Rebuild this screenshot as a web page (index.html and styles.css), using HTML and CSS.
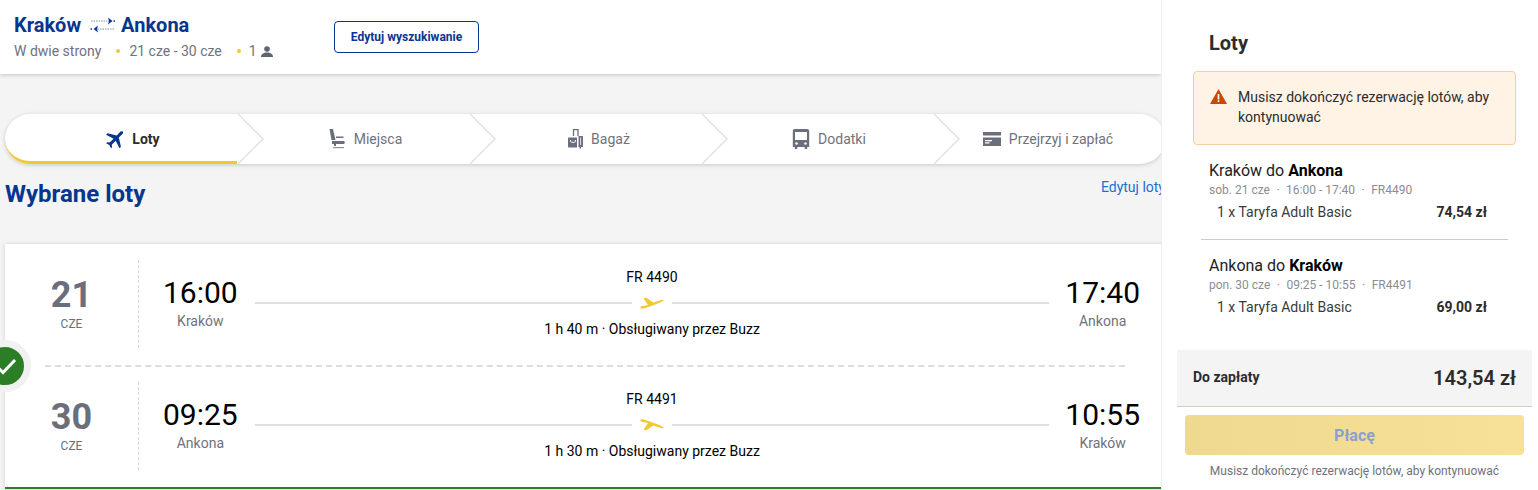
FILE: index.html
```html
<!DOCTYPE html>
<html lang="pl">
<head>
<meta charset="utf-8">
<title>Loty</title>
<link rel="stylesheet" href="styles.css">
</head>
<body>
<svg class="defs" width="0" height="0" aria-hidden="true">
  <symbol id="mini" viewBox="0 0 24 12"><path d="M.5 9.500L8 8 3.500 1.200 6 .5l7.500 5L21 3c2-.6 3-.1 2.500.6C22 5 18 6.500 14 8l-8 2.800c-2.500.8-4.500 1-5.400.8z"/></symbol>
</svg>
<div class="main">
  <header class="top">
    <div class="route">
      <div class="cities">Kraków
        <svg class="swap" width="26" height="16" viewBox="0 0 26 16"><g fill="none" stroke="#073590" stroke-opacity=".55" stroke-width="1" stroke-dasharray="1.500 1"><path d="M1 4h20M5 12h20"/></g><path fill="#073590" d="M18 .5l4.500 3.500L18 7.500 19 4zM8 8.500L3.500 12 8 15.500 7 12z"/><path fill="#073590" d="M23.500 3.300H25v1.500h-1.500zM.5 11.300H2v1.500H.5z"/></svg>
        Ankona</div>
      <div class="meta"><span>W dwie strony</span><i class="dot"></i><span>21 cze - 30 cze</span><i class="dot"></i><span class="pax">1
        <svg width="12" height="11" viewBox="0 0 12 11"><circle cx="6" cy="3" r="2.800" fill="#5f6470"/><path d="M0 11c0-3 2.500-4.500 6-4.500s6 1.500 6 4.500z" fill="#5f6470"/></svg></span></div>
    </div>
    <button class="edit">Edytuj wyszukiwanie</button>
  </header>
  <div class="content">
    <nav class="steps">
      <div class="step active">
        <svg class="ico" width="24" height="24" viewBox="0 0 24 24"><path fill="#073590" transform="rotate(45 12 12)" d="M21 16v-2l-8-5V3.500c0-.83-.67-1.500-1.500-1.500S10 2.670 10 3.500V9l-8 5v2l8-2.500V19l-2 1.500V22l3.500-1 3.500 1v-1.500L13 19v-5.500l8 2.500z"/></svg>
        <span>Loty</span>
        <svg class="chev" width="28" height="52" viewBox="0 0 28 52"><path d="M1 1l25 25L1 51" fill="none" stroke="#e2e2e2" stroke-width="1.500"/></svg>
      </div>
      <div class="step seat">
        <svg class="ico" width="16" height="20" viewBox="0 0 16 20"><path fill="#6b6f7c" d="M.5 0H4l2.500 11h-4zM7 7.500h7.500V9H7zM3 12h11.500c.8 0 1.300.6 1.300 1.500s-.5 1.500-1.300 1.500H3zM5 15h2v2H5z"/><path fill="#8f929b" d="M4 18h11v1.200H4z"/></svg>
        <span>Miejsca</span>
        <svg class="chev" width="28" height="52" viewBox="0 0 28 52"><path d="M1 1l25 25L1 51" fill="none" stroke="#e2e2e2" stroke-width="1.500"/></svg>
      </div>
      <div class="step bag">
        <svg class="ico" width="15" height="20" viewBox="0 0 15 20"><path fill="none" stroke="#6b6f7c" stroke-width="1.300" d="M5.500 7V.7h4.500V7"/><path fill="#6b6f7c" d="M10.500 7H14c.6 0 1 .4 1 1v9c0 .6-.4 1-1 1h-1v1.500h-1.500V18h-1z"/><path fill="#fff" d="M12.300 8.500h.8V16h-.8z"/><path fill="#6b6f7c" d="M1 8.500h8v10H1c-.6 0-1-.4-1-1v-8c0-.6.4-1 1-1z"/><path fill="none" stroke="#fff" d="M2.500 11v1.300c0 1.500 5 1.500 5 0V11"/></svg>
        <span>Bagaż</span>
        <svg class="chev" width="28" height="52" viewBox="0 0 28 52"><path d="M1 1l25 25L1 51" fill="none" stroke="#e2e2e2" stroke-width="1.500"/></svg>
      </div>
      <div class="step bus">
        <svg class="ico" width="18" height="20" viewBox="0 0 18 20"><path fill="#6b6f7c" d="M3 0h12c1.300 0 2.200.9 2.200 2.200V18h-2v2h-2.500v-2H5.300v2H2.800v-2H.8V2.200C.8.900 1.700 0 3 0z"/><path fill="#fff" d="M3 3h12v8H3z"/><circle cx="4.500" cy="14.500" r="1.200" fill="#fff"/><circle cx="13.500" cy="14.500" r="1.200" fill="#fff"/></svg>
        <span>Dodatki</span>
        <svg class="chev" width="28" height="52" viewBox="0 0 28 52"><path d="M1 1l25 25L1 51" fill="none" stroke="#e2e2e2" stroke-width="1.500"/></svg>
      </div>
      <div class="step last">
        <svg class="ico" width="18" height="14" viewBox="0 0 18 14"><path fill="#6b6f7c" d="M0 0h18v14H0z"/><path fill="#fff" d="M0 3.500h18v2H0zM2 8h7v1.300H2zM2 10.300h4.500v1.200H2z"/></svg>
        <span>Przejrzyj i zapłać</span>
      </div>
    </nav>
    <div class="heading"><h1>Wybrane loty</h1><a class="editlink">Edytuj loty</a></div>
    <section class="card">
      <div class="row">
        <div class="date"><b>21</b><small>CZE</small></div>
        <div class="leg">
          <div class="time"><strong>16:00</strong><span>Kraków</span></div>
          <div class="path">
            <div>FR 4490</div>
            <div class="line"><svg class="plane" width="24" height="12"><use href="#mini"/></svg></div>
            <div>1 h 40 m · Obsługiwany przez Buzz</div>
          </div>
          <div class="time"><strong>17:40</strong><span>Ankona</span></div>
        </div>
      </div>
      <div class="sep"></div>
      <div class="row">
        <div class="date"><b>30</b><small>CZE</small></div>
        <div class="leg">
          <div class="time"><strong>09:25</strong><span>Ankona</span></div>
          <div class="path">
            <div>FR 4491</div>
            <div class="line"><svg class="plane down" width="24" height="12"><use href="#mini"/></svg></div>
            <div>1 h 30 m · Obsługiwany przez Buzz</div>
          </div>
          <div class="time"><strong>10:55</strong><span>Kraków</span></div>
        </div>
      </div>
      <div class="check"><svg width="22" height="22" viewBox="0 0 22 22"><path d="M2 11.500l6 6L20 5" fill="none" stroke="#fff" stroke-width="3"/></svg></div>
    </section>
  </div>
</div>
<aside class="panel">
  <h2>Loty</h2>
  <div class="alert">
    <svg width="17" height="15" viewBox="0 0 17 15"><path fill="#c8490b" d="M8.500 0L17 15H0z"/><path fill="#fff" d="M7.700 5h1.600v5.500H7.700zM7.700 11.300h1.600v1.700H7.700z"/></svg>
    <p>Musisz dokończyć rezerwację lotów, aby kontynuować</p>
  </div>
  <div class="item first">
    <div class="title">Kraków do <b>Ankona</b></div>
    <div class="info"><span>sob. 21 cze</span><span>·</span><span>16:00 - 17:40</span><span>·</span><span>FR4490</span></div>
    <div class="fare"><span>1 x Taryfa Adult Basic</span><b>74,54 zł</b></div>
  </div>
  <div class="item">
    <div class="title">Ankona do <b>Kraków</b></div>
    <div class="info"><span>pon. 30 cze</span><span>·</span><span>09:25 - 10:55</span><span>·</span><span>FR4491</span></div>
    <div class="fare"><span>1 x Taryfa Adult Basic</span><b>69,00 zł</b></div>
  </div>
  <div class="total"><span>Do zapłaty</span><b>143,54 zł</b></div>
  <button class="pay">Płacę</button>
  <div class="note">Musisz dokończyć rezerwację lotów, aby kontynuować</div>
</aside>
</body>
</html>
```
FILE: styles.css
```css
* { box-sizing: border-box; }
html, body { margin: 0; height: 490px; overflow: hidden; }
body { display: flex; font-family: Roboto, "Liberation Sans", sans-serif; background: #fff; color: #000; }
.defs { position: absolute; }
.main { flex: 0 0 1161px; width: 1161px; height: 490px; overflow: hidden; background: #f4f4f4; }
.top { height: 74px; background: #fff; box-shadow: 0 1px 4px rgba(0,0,0,.2); display: flex; align-items: flex-start; padding: 13px 0 0 14px; position: relative; }
.route { width: 320px; }
.cities { display: flex; align-items: center; gap: 8px; font-size: 20px; font-weight: 700; line-height: 24px; color: #073590; }
.swap { flex: none; margin-left: 1px; margin-right: -3px; }
.meta { display: flex; align-items: center; margin-top: 5px; font-size: 14px; line-height: 18px; color: #6f727c; }
.dot { width: 4px; height: 4px; border-radius: 50%; background: #f1c933; margin: 0 9px 0 15px; }
.pax { display: flex; align-items: center; gap: 4px; margin-left: -1px; }
.edit { width: 145px; height: 32px; margin-top: 8px; border: 1px solid #073590; border-radius: 4px; background: #fff; color: #073590; font: 700 12px Roboto, sans-serif; }
.content { padding: 40px 0 0 5px; width: 1165px; }
.steps { display: flex; height: 50px; width: 1160px; background: #fff; border-radius: 25px; box-shadow: 0 1px 4px rgba(0,0,0,.18); }
.step { flex: 0 0 232px; position: relative; display: flex; align-items: center; justify-content: center; gap: 8px; font-size: 14px; color: #6f727c; }
.seat { padding-left: 25px; gap: 9px; }
.bus { padding-left: 24px; }
.bag { padding-left: 28px; }
.last { padding-right: 2px; }
.step.active { color: #2c2c2c; font-weight: 700; border-bottom: 3px solid #f1c933; border-radius: 25px 0 0 25px; padding-top: 3px; padding-left: 22px; gap: 4px; }
.chev { position: absolute; right: -28px; top: -1px; z-index: 1; }
.heading { display: flex; justify-content: space-between; align-items: flex-start; height: 80px; padding-top: 14px; }
h1 { margin: 0; font-size: 24px; line-height: 32px; font-weight: 700; color: #073590; }
.editlink { font-size: 14px; color: #1a6fd6; line-height: 16px; padding-top: 1px; }
.card { position: relative; width: 1160px; height: 245px; padding: 16px 0 0; background: #fff; border-bottom: 2px solid #2b7d26; box-shadow: 0 0 4px rgba(0,0,0,.15); }
.row { display: flex; height: 88px; }
.sep { height: 2px; margin: 17px 40px 15px 40px; border-top: 2px dashed #ddd; }
.date { flex: 0 0 134px; border-right: 1px dashed #d8d8d8; display: flex; flex-direction: column; align-items: center; padding-top: 15px; color: #6b6f7c; }
.date b { font-size: 36px; line-height: 40px; }
.date small { font-size: 12px; line-height: 16px; margin-top: 1px; }
.leg { flex: 1; display: flex; padding: 0 25px 0 24px; }
.time { flex: 0 0 74px; display: flex; flex-direction: column; align-items: center; padding-top: 13px; }
.time strong { font-size: 30px; line-height: 40px; font-weight: 400; }
.time span { font-size: 14px; line-height: 16px; color: #6f727c; }
.path { flex: 1; margin: 0 16px 0 17px; display: flex; flex-direction: column; align-items: center; font-size: 14px; line-height: 18px; padding-top: 8px; }
.line { width: 100%; height: 2px; background: #e0e0e0; margin: 16px 0 16px; display: flex; justify-content: center; align-items: center; }
.plane { fill: #f1c933; background: #fff; box-sizing: content-box; padding: 4px 8px; flex: none; }
.down { transform: scaleY(-1); }
.check { position: absolute; left: -26px; top: 96px; width: 52px; height: 52px; border-radius: 50%; background: #2b7d26; border: 7px solid #f1f1f1; display: flex; align-items: center; justify-content: center; }
.check svg { position: relative; left: 1px; }
.panel { flex: 1; background: #fff; border-left: 1px solid #f0f0f0; position: relative; padding-top: 31px; height: 490px; }
h2 { margin: 0 0 16px 47px; font-size: 20px; line-height: 24px; font-weight: 700; color: #2c2c2c; }
.alert { margin-left: 31px; width: 323px; height: 74px; background: #fef3e4; border: 1px solid #f3cfa0; border-radius: 4px; display: flex; padding: 15px 16px; gap: 11px; }
.alert svg { flex: none; margin-top: 2px; }
.alert p { margin: 0; font-size: 14px; line-height: 20px; color: #2c2c2c; }
.item { margin-left: 39px; width: 307px; padding: 17px 8px 0; }
.item.first { border-bottom: 1px solid #ccc; height: 95px; }
.item:not(.first) { height: 110px; }
.title { font-size: 16px; line-height: 18px; color: #222; }
.title b { color: #000; }
.info { display: flex; gap: 6.500px; font-size: 12px; line-height: 14px; color: #8b8d94; margin-top: 3px; }
.fare { display: flex; justify-content: space-between; font-size: 14px; line-height: 18px; color: #3a3a3a; margin-top: 6px; padding: 0 13px 0 8px; }
.fare b { color: #2c2c2c; }
.total { margin-left: 15px; width: 355px; height: 57px; background: #f4f4f4; border-bottom: 1px solid #ccc; display: flex; align-items: center; justify-content: space-between; padding: 0 16px; color: #2c2c2c; font-size: 14px; font-weight: 700; }
.total span { margin-top: -2px; }
.total b { font-size: 20px; font-weight: 600; }
.pay { display: block; margin: 8px 0 0 23px; width: 339px; height: 40px; border: 0; border-radius: 4px; background: linear-gradient(90deg, #eed98f, #f7e196); color: #8aa0d4; font: 700 16px Roboto, sans-serif; }
.note { margin: 8px 0 0 15px; width: 355px; text-align: center; font-size: 12px; line-height: 16px; color: #6f727c; }
```
